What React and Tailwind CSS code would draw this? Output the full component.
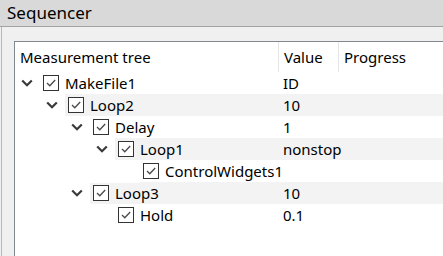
const rows = [
  { label: "MakeFile1", value: "ID", level: 0, open: true },
  { label: "Loop2", value: "10", level: 1, open: true },
  { label: "Delay", value: "1", level: 2, open: true },
  { label: "Loop1", value: "nonstop", level: 3, open: true },
  { label: "ControlWidgets1", value: "", level: 4, open: false },
  { label: "Loop3", value: "10", level: 2, open: true },
  { label: "Hold", value: "0.1", level: 3, open: false },
];

const indent = ["w-[25px]", "w-[50px]", "w-[75px]", "w-[100px]", "w-[125px]"];

function Chevron() {
  return (
    <svg width="12" height="8" viewBox="0 0 12 8" className="block">
      <path d="M1.2 1.5 L6 6.2 L10.8 1.5" fill="none" stroke="#3a3a3a" strokeWidth="2.2" />
    </svg>
  );
}

function Check() {
  return (
    <div className="flex h-[16px] w-[16px] shrink-0 items-center justify-center border border-[#333333] bg-white">
      <svg width="14" height="14" viewBox="0 0 14 14" className="block">
        <path d="M3 7 L5.8 9.8 L11.2 4" fill="none" stroke="#4a4a4a" strokeWidth="1.3" />
      </svg>
    </div>
  );
}

export default function App() {
  return (
    <div
      className="flex h-[256px] w-[443px] flex-col overflow-hidden bg-[#f0f0f0] text-[15px] text-black"
      style={{ fontFamily: '"Noto Sans", "Open Sans", sans-serif' }}
    >
      <div className="flex h-[27px] shrink-0 items-center border-b border-[#a3a3a3] bg-[#d9d9d9] px-[7px] text-[17px]">
        Sequencer
      </div>

      <div className="flex flex-1 pl-px">
        <div className="flex flex-1 flex-col border-l border-[#b9b9b9] pl-[12px] pt-[14px]">
          <div className="flex-1 border-l border-t border-[#828790] bg-white">
            <div className="grid h-[30px] grid-cols-[264px_60px_1fr] items-stretch">
              <div className="flex items-center border-r border-[#e5e5e5] pl-[5px]">Measurement tree</div>
              <div className="flex items-center border-r border-[#e5e5e5] pl-[5px]">Value</div>
              <div className="flex items-center pl-[5px]">Progress</div>
            </div>

            {rows.map((row, i) => (
              <div
                key={row.label}
                className={`grid h-[22px] grid-cols-[264px_60px_1fr] ${i % 2 === 1 ? "bg-[#f3f3f3]" : ""}`}
              >
                <div className="flex items-center">
                  <div className={`flex h-full shrink-0 items-center justify-end bg-white ${indent[row.level]}`}>
                    <div className="flex w-[25px] items-center pl-[6px]">{row.open && <Chevron />}</div>
                  </div>
                  <div className="ml-[3px] flex items-center gap-[6px] whitespace-nowrap">
                    <Check />
                    <span>{row.label}</span>
                  </div>
                </div>
                <div className="flex items-center pl-[4px]">{row.value}</div>
                <div />
              </div>
            ))}
          </div>
        </div>
      </div>
    </div>
  );
}
